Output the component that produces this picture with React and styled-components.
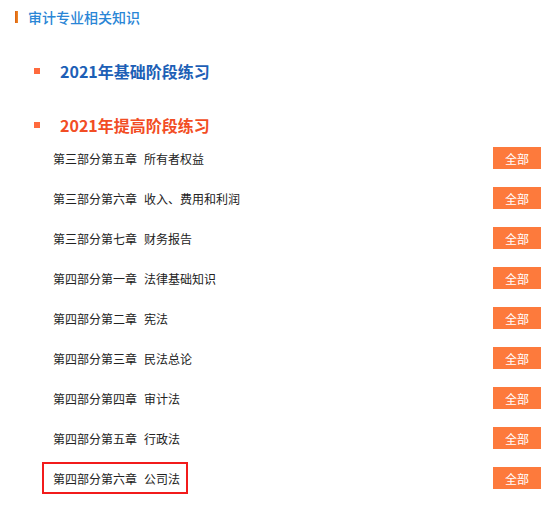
import styled, { createGlobalStyle } from 'styled-components';

const GlobalStyle = createGlobalStyle`
  html, body {
    margin: 0;
    padding: 0;
    background: #fff;
  }
  body {
    font-family: "Microsoft YaHei", "Noto Sans CJK SC", "Noto Sans", sans-serif;
  }
`;

const chapters = [
  { part: '第三部分第五章', name: '所有者权益' },
  { part: '第三部分第六章', name: '收入、费用和利润' },
  { part: '第三部分第七章', name: '财务报告' },
  { part: '第四部分第一章', name: '法律基础知识' },
  { part: '第四部分第二章', name: '宪法' },
  { part: '第四部分第三章', name: '民法总论' },
  { part: '第四部分第四章', name: '审计法' },
  { part: '第四部分第五章', name: '行政法' },
  { part: '第四部分第六章', name: '公司法', marked: true },
];

const Page = styled.div`
  width: 551px;
  box-sizing: border-box;
  padding: 9px 10px 0 15px;
`;

const TitleRow = styled.div`
  display: flex;
  align-items: center;
  gap: 10px;
  height: 16px;
  margin-bottom: 33px;
`;

const TitleBar = styled.span`
  width: 3px;
  height: 12px;
  background: linear-gradient(to right, #d9600c, #f08a2c);
`;

const Title = styled.h2`
  margin: 0;
  font-size: 14px;
  font-weight: 500;
  line-height: 16px;
  color: #2a86d6;
`;

const Heading = styled.div`
  display: flex;
  align-items: center;
  gap: 20px;
  height: 26px;
  padding-left: 19px;
  margin-bottom: ${(p) => (p.$open ? '0' : '28px')};
`;

const Bullet = styled.span`
  width: 6px;
  height: 6px;
  background: #ff6a3d;
`;

const HeadingText = styled.span`
  font-size: 16px;
  font-weight: 700;
  color: ${(p) => (p.$open ? '#f24d24' : '#1d5fb6')};
`;

const Row = styled.div`
  display: flex;
  align-items: center;
  justify-content: space-between;
  height: 40px;
  padding-left: 27px;
`;

const Label = styled.div`
  display: flex;
  align-items: center;
  height: 28px;
  padding: 0 6px 0 9px;
  border: 2px solid ${(p) => (p.$marked ? '#f21b1b' : 'transparent')};
  font-size: 12px;
  color: #222;
`;

const Name = styled.span`
  margin-left: 7px;
`;

const AllButton = styled.button`
  width: 48px;
  height: 22px;
  border: none;
  padding: 0;
  background: #fd7a3c;
  color: #fff;
  font-family: inherit;
  font-size: 12px;
  cursor: pointer;
`;

export default function App() {
  return (
    <>
      <GlobalStyle />
      <Page>
        <TitleRow>
          <TitleBar />
          <Title>审计专业相关知识</Title>
        </TitleRow>

        <Heading>
          <Bullet />
          <HeadingText>2021年基础阶段练习</HeadingText>
        </Heading>

        <Heading $open>
          <Bullet />
          <HeadingText $open>2021年提高阶段练习</HeadingText>
        </Heading>

        {chapters.map((c) => (
          <Row key={c.part}>
            <Label $marked={c.marked}>
              {c.part}
              <Name>{c.name}</Name>
            </Label>
            <AllButton>全部</AllButton>
          </Row>
        ))}
      </Page>
    </>
  );
}
